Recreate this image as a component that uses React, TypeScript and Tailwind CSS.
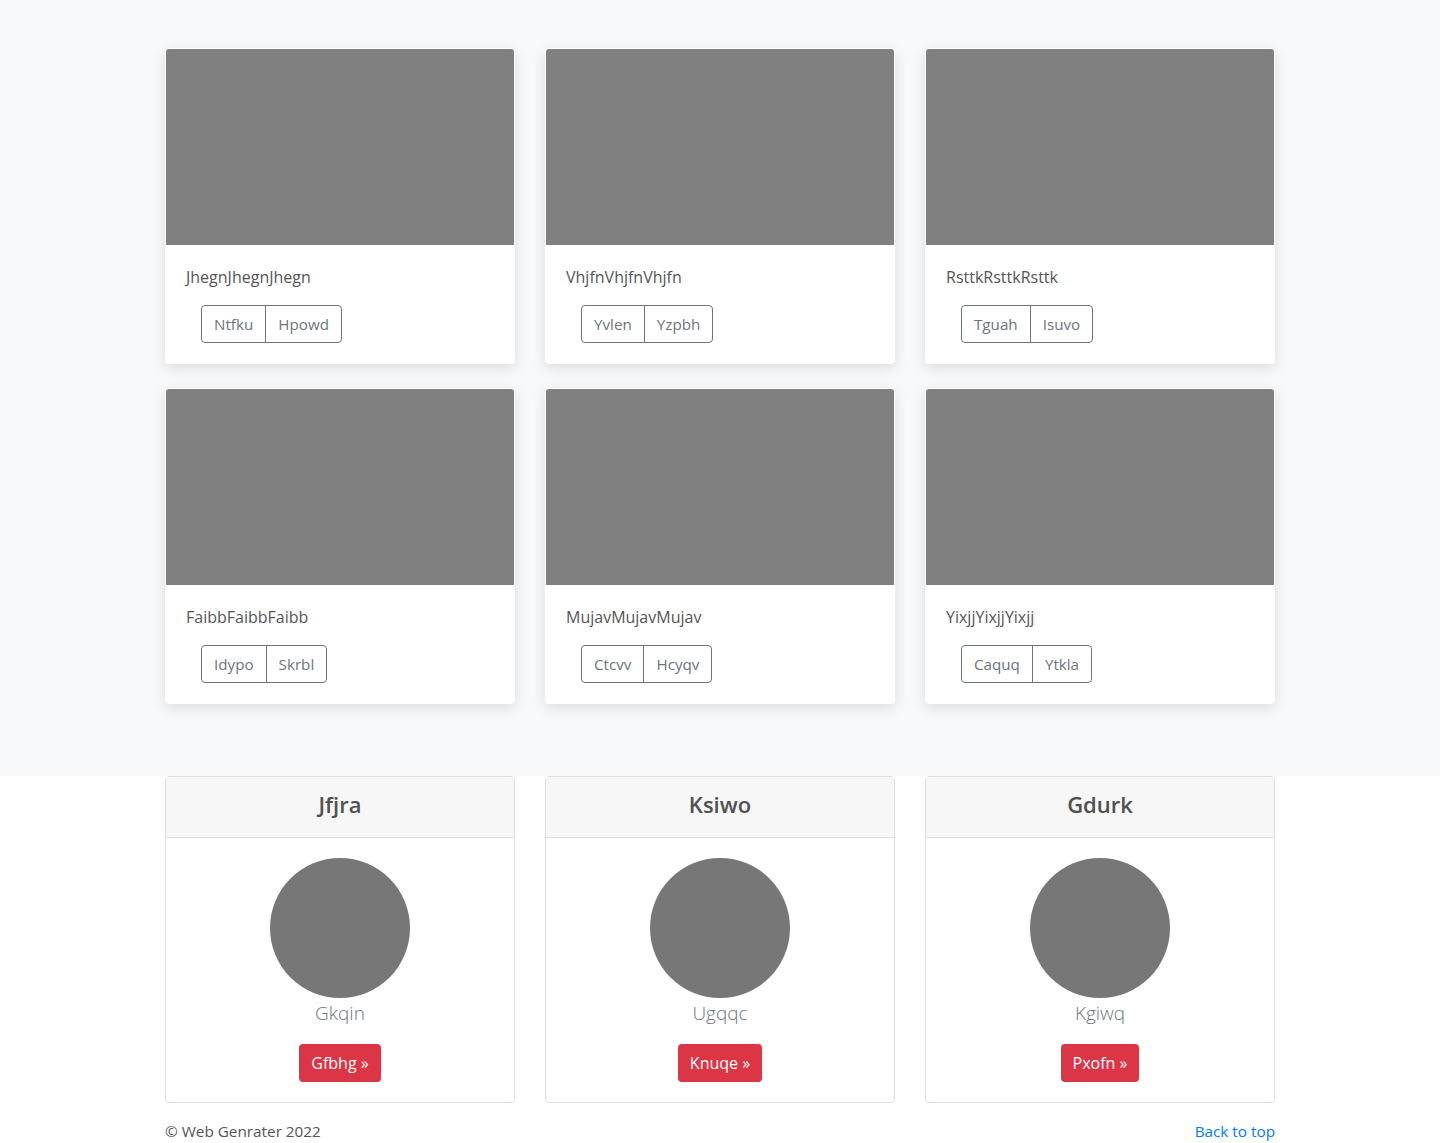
import React from "react";

const albums = [
  { title: "JhegnJhegnJhegn", a: "Ntfku", b: "Hpowd" },
  { title: "VhjfnVhjfnVhjfn", a: "Yvlen", b: "Yzpbh" },
  { title: "RsttkRsttkRsttk", a: "Tguah", b: "Isuvo" },
  { title: "FaibbFaibbFaibb", a: "Idypo", b: "Skrbl" },
  { title: "MujavMujavMujav", a: "Ctcvv", b: "Hcyqv" },
  { title: "YixjjYixjjYixjj", a: "Caquq", b: "Ytkla" },
];

const pricing = [
  { head: "Jfjra", name: "Gkqin", btn: "Gfbhg" },
  { head: "Ksiwo", name: "Ugqqc", btn: "Knuqe" },
  { head: "Gdurk", name: "Kgiwq", btn: "Pxofn" },
];

export default function App() {
  return (
    <div
      className="min-h-[1143px] bg-white text-[16px] leading-[24px] text-[#212529]"
      style={{ fontFamily: '"Open Sans", "Noto Sans", Arial, sans-serif' }}
    >
      <section className="bg-[#f8f9fa] py-12">
        <div className="mx-auto max-w-[1140px] px-[15px]">
          <div className="grid grid-cols-3 gap-x-[30px]">
            {albums.map((c) => (
              <div
                key={c.title}
                className="mb-6 overflow-hidden rounded-[4px] border border-transparent bg-white shadow-[0_4px_14px_rgba(0,0,0,0.12)]"
              >
                <div className="h-[196px] bg-[#808080]" />
                <div className="px-5 pt-5 pb-5">
                  <p className="mb-4 text-[16px] text-[#555]">{c.title}</p>
                  <div className="ml-[15px] flex">
                    <button className="h-[38px] rounded-l-[4px] border border-[#6c757d] px-3 text-[15.2px] text-[#6c757d]">
                      {c.a}
                    </button>
                    <button className="-ml-px h-[38px] rounded-r-[4px] border border-[#6c757d] px-3 text-[15.2px] text-[#6c757d]">
                      {c.b}
                    </button>
                  </div>
                </div>
              </div>
            ))}
          </div>
        </div>
      </section>

      <section className="mx-auto max-w-[1140px] px-[15px]">
        <div className="grid grid-cols-3 gap-x-[30px]">
          {pricing.map((p) => (
            <div key={p.head} className="rounded-[4px] border border-[#dfdfdf] bg-white">
              <div className="border-b border-[#dfdfdf] bg-[#f7f7f7] pt-[13px] pb-[19px] text-center text-[22px] leading-[28px] font-semibold text-[#505050]">
                {p.head}
              </div>
              <div className="flex flex-col items-center px-5 pt-5 pb-5">
                <div className="h-[140px] w-[140px] rounded-full bg-[#777]" />
                <div className="text-[19px] leading-[30px] font-light text-[#6c757d]">{p.name}</div>
                <button className="mt-4 h-[38px] rounded-[4px] bg-[#dc3545] px-3 text-[16px] text-white">
                  {p.btn} »
                </button>
              </div>
            </div>
          ))}
        </div>
        <footer className="flex items-center justify-between pt-4 text-[15.3px]">
          <span className="text-[#555]">© Web Genrater 2022</span>
          <a href="#" className="text-[#007bff]">Back to top</a>
        </footer>
      </section>
    </div>
  );
}
